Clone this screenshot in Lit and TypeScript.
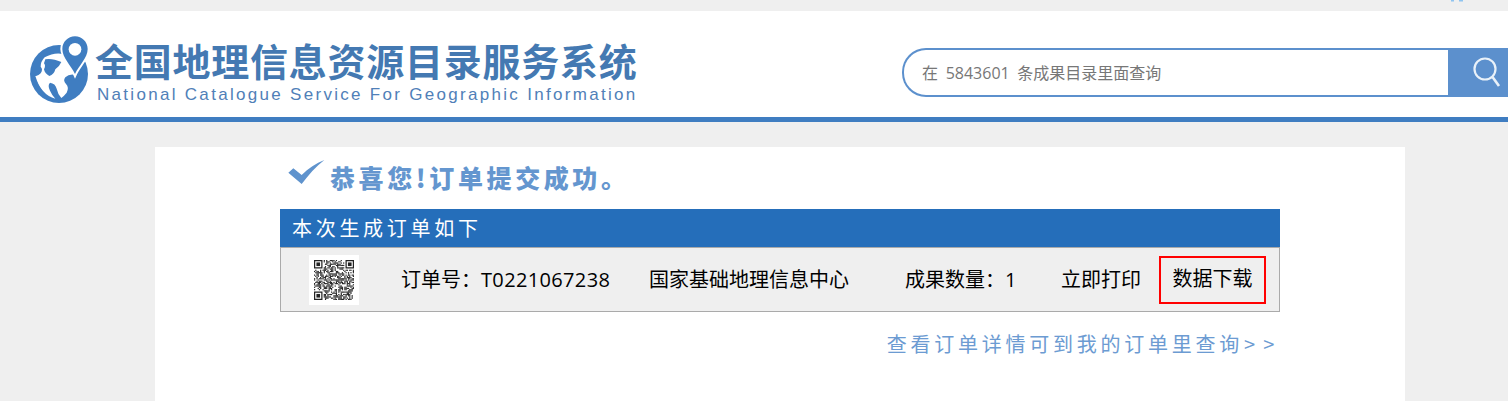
import { LitElement, html, css, svg } from "lit";
import { customElement } from "lit/decorators.js";

const N = 33;
function qrCells() {
  const cells: ReturnType<typeof svg>[] = [];
  let seed = 20210;
  const rnd = () => ((seed = (seed * 1103515245 + 12345) & 0x7fffffff) >> 8) % 100;
  const inFinder = (x: number, y: number) =>
    (x < 8 && y < 8) || (x >= N - 8 && y < 8) || (x < 8 && y >= N - 8);
  for (let y = 0; y < N; y++) {
    for (let x = 0; x < N; x++) {
      if (!inFinder(x, y) && rnd() < 54) {
        cells.push(svg`<rect x=${x} y=${y} width="1" height="1" />`);
      }
    }
  }
  for (const [fx, fy] of [[0, 0], [N - 7, 0], [0, N - 7]]) {
    cells.push(svg`<path fill-rule="evenodd" d="M${fx} ${fy}h7v7h-7zM${fx + 1} ${fy + 1}v5h5v-5z" />`);
    cells.push(svg`<rect x=${fx + 2} y=${fy + 2} width="3" height="3" />`);
  }
  return cells;
}

@customElement("app-root")
export class AppRoot extends LitElement {
  static styles = css`
    :host {
      display: block;
      width: 1508px;
      height: 401px;
      overflow: hidden;
      background: #efefef;
      font-family: "Noto Sans CJK SC", "Open Sans", sans-serif;
    }
    .top {
      height: 11px;
      display: flex;
      justify-content: flex-end;
      padding-right: 45px;
    }
    .top svg { display: block; }
    .header {
      height: 106px;
      background: #fff;
      border-bottom: 5px solid #3f7dc1;
      display: flex;
      align-items: flex-start;
      justify-content: space-between;
    }
    .brand {
      display: flex;
      margin: 21px 0 0 26px;
    }
    .brand svg { display: block; flex: none; filter: blur(0.4px); }
    .names { margin: 10px 0 0 -1px; }
    .cn {
      font-family: "Liberation Sans", "Noto Sans CJK SC", sans-serif;
      font-size: 38px;
      line-height: 42px;
      font-weight: 700;
      letter-spacing: 0.75px;
      color: #4479b2;
      white-space: nowrap;
    }
    .en {
      font-family: "Liberation Sans", Arial, sans-serif;
      font-size: 17px;
      line-height: 19px;
      letter-spacing: 2.3px;
      color: #5080b8;
      margin: 1px 0 0 2px;
      white-space: nowrap;
    }
    .search {
      display: flex;
      margin-top: 37px;
      height: 49px;
    }
    .search input {
      box-sizing: border-box;
      width: 546px;
      height: 49px;
      border: 2px solid #5c90cd;
      border-right: 0;
      border-radius: 24px 0 0 24px;
      padding: 0 0 0 18px;
      outline: 0;
      background: #fff;
      font: 16px "Open Sans", "Noto Sans CJK SC", sans-serif;
      word-spacing: 3.5px;
    }
    .search input::placeholder { color: #777; opacity: 1; }
    .search button {
      width: 60px;
      height: 49px;
      border: 0;
      padding: 0 0 0 24px;
      background: #5c90cd;
      display: flex;
      align-items: center;
    }
    .card {
      width: 1000px;
      height: 254px;
      margin: 25px 0 0 155px;
      padding: 0 125px;
      background: #fff;
    }
    .title {
      display: flex;
      align-items: flex-start;
      height: 62px;
    }
    .title svg { display: block; margin-top: 3px; flex: none; filter: blur(0.3px); }
    .title h1 {
      margin: 12px 0 0 0;
      font-size: 25px;
      line-height: 36px;
      font-weight: 900;
      letter-spacing: 3.6px;
      color: #6496cf;
      white-space: nowrap;
    }
    .bar {
      height: 38px;
      background: #256eba;
      color: #fff;
      font-size: 20px;
      line-height: 38px;
      letter-spacing: 3.7px;
      padding-left: 12px;
    }
    .row {
      box-sizing: border-box;
      height: 65px;
      background: #efefef;
      border: 1px solid #aaa;
      display: flex;
      align-items: center;
      color: #000;
      font-family: "Open Sans", "Noto Sans CJK SC", sans-serif;
      font-size: 20px;
      white-space: nowrap;
    }
    .qr {
      width: 50px;
      height: 50px;
      margin: 0 42px 0 28px;
      background: #fff;
      display: flex;
      align-items: center;
      justify-content: center;
      flex: none;
    }
    .qr svg { display: block; filter: blur(0.5px); }
    .order, .org, .count, .print { margin-bottom: 2px; }
    .order { width: 248px; }
    .order span { letter-spacing: 0.35px; }
    .org { width: 256px; }
    .count { width: 156px; }
    .print { width: 98px; }
    .download {
      box-sizing: border-box;
      width: 107px;
      height: 48px;
      border: 2px solid #f00;
      line-height: 42px;
      text-align: center;
    }
    .more {
      display: block;
      margin-top: 15px;
      padding-right: 2px;
      text-align: right;
      font-size: 20px;
      line-height: 34px;
      letter-spacing: 3.75px;
      color: #6c9bd2;
      text-decoration: none;
      white-space: nowrap;
    }
    .more span { margin-left: 1px; word-spacing: -4px; }
  `;

  render() {
    return html`
      <div class="top">
        <svg width="12" height="2" viewBox="0 0 12 2" aria-hidden="true">
          <rect x="0" y="0" width="3" height="1.500" fill="#8fc4f0" />
          <rect x="8" y="0" width="4" height="1.500" fill="#8fc4f0" />
        </svg>
      </div>
      <header class="header">
        <div class="brand">
          <svg width="70" height="76" viewBox="0 0 210 228" aria-hidden="true">
            <circle cx="99" cy="126" r="87" fill="#3f7dc1" />
            <path d="M56 76Q84 60 112 66Q128 92 144 128Q128 126 118 136Q110 146 120 156Q130 166 122 182Q114 192 106 198Q96 188 92 170Q88 154 72 152Q64 160 72 176Q78 190 88 200Q46 190 28 132Q34 134 44 124Q52 112 44 104Q44 88 56 76Z" fill="#fff" />
            <path d="M58 82Q78 78 106 90Q100 104 88 112Q84 128 70 132Q56 124 54 112Q60 100 54 94Z" fill="#3f7dc1" />
            <path d="M30 132Q42 140 54 138Q64 142 66 150Q58 160 50 174Q36 156 30 132Z" fill="#fff" />
            <path d="M147 13C126 13 109 30 109 51 109 78 135 100 147 126 159 100 185 78 185 51 185 30 168 13 147 13Z" fill="#3f7dc1" stroke="#fff" stroke-width="12" paint-order="stroke" />
            <circle cx="147" cy="52" r="19" fill="#fff" />
          </svg>
          <div class="names">
            <div class="cn">全国地理信息资源目录服务系统</div>
            <div class="en">National Catalogue Service For Geographic Information</div>
          </div>
        </div>
        <div class="search">
          <input type="text" placeholder="在 5843601 条成果目录里面查询" />
          <button aria-label="查询">
            <svg width="32" height="34" viewBox="0 0 32 34" aria-hidden="true">
              <circle cx="13" cy="13" r="10.500" fill="none" stroke="#e9f1f9" stroke-width="2.200" />
              <path d="M20.500 21l6.500 9" stroke="#e9f1f9" stroke-width="2.600" fill="none" />
            </svg>
          </button>
        </div>
      </header>
      <main class="card">
        <div class="title">
          <svg width="50" height="45" viewBox="0 0 150 135" aria-hidden="true">
            <path d="M25 68 40 55 65 75C85 55 108 40 133 30 108 50 85 75 65 102Z" fill="#5f93cd" />
          </svg>
          <h1>恭喜您!订单提交成功。</h1>
        </div>
        <div class="bar">本次生成订单如下</div>
        <div class="row">
          <div class="qr">
            <svg width="40" height="40" viewBox="0 0 ${N} ${N}" fill="#222" aria-hidden="true">
              ${qrCells()}
            </svg>
          </div>
          <div class="order">订单号：<span>T0221067238</span></div>
          <div class="org">国家基础地理信息中心</div>
          <div class="count">成果数量：1</div>
          <div class="print">立即打印</div>
          <div class="download">数据下载</div>
        </div>
        <a class="more" href="#">查看订单详情可到我的订单里查询<span>> ></span></a>
      </main>
    `;
  }
}
